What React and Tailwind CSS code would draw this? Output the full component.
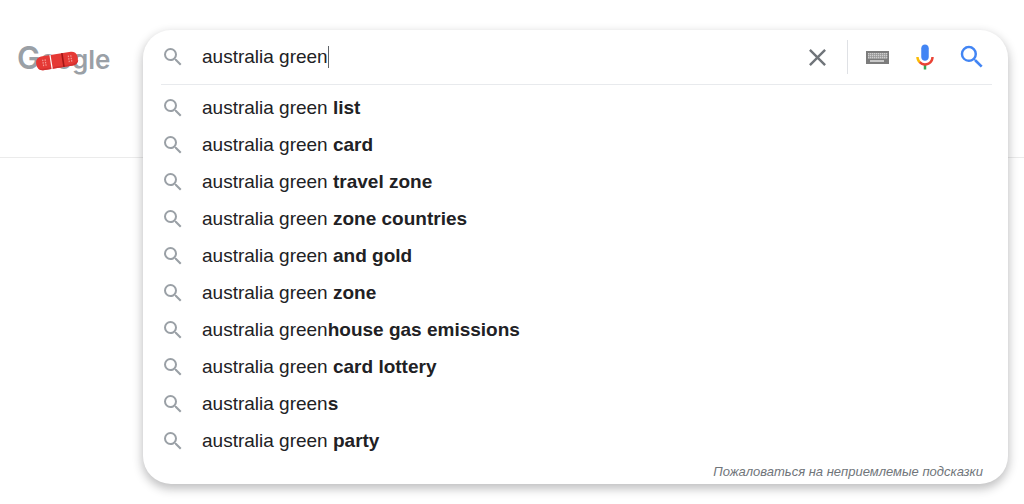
import React from "react";

const SUGGESTIONS = [
  { typed: "australia green ", rest: "list" },
  { typed: "australia green ", rest: "card" },
  { typed: "australia green ", rest: "travel zone" },
  { typed: "australia green ", rest: "zone countries" },
  { typed: "australia green ", rest: "and gold" },
  { typed: "australia green ", rest: "zone" },
  { typed: "australia green", rest: "house gas emissions" },
  { typed: "australia green ", rest: "card lottery" },
  { typed: "australia green", rest: "s" },
  { typed: "australia green ", rest: "party" },
];

function SearchIcon({ className }) {
  return (
    <svg viewBox="0 0 24 24" className={className} fill="currentColor" aria-hidden="true">
      <path d="M15.5 14h-.79l-.28-.27A6.471 6.471 0 0 0 16 9.5 6.5 6.5 0 1 0 9.5 16c1.61 0 3.09-.59 4.23-1.57l.27.28v.79l5 4.99L20.49 19l-4.99-5zm-6 0C7.01 14 5 11.99 5 9.5S7.01 5 9.5 5 14 7.01 14 9.5 11.99 14 9.5 14z" />
    </svg>
  );
}

function CloseIcon() {
  return (
    <svg viewBox="0 0 24 24" className="size-[29px] text-[#70757a]" fill="currentColor" aria-hidden="true">
      <path d="M19 6.41L17.59 5 12 10.59 6.41 5 5 6.41 10.59 12 5 17.59 6.41 19 12 13.41 17.59 19 19 17.59 13.41 12z" />
    </svg>
  );
}

function KeyboardIcon() {
  const columns = [2, 4, 6, 8, 10, 12, 14, 16, 18, 20];
  return (
    <svg viewBox="0 0 23 13" className="h-[13px] w-[23px]" aria-hidden="true">
      <rect width="23" height="13" fill="#7c7c7c" />
      <rect x="2" y="2" width="19" height="6" fill="#969696" />
      {[2, 4, 6].map((y) =>
        columns.map((x) => <rect key={`${x}-${y}`} x={x} y={y} width="1.3" height="1.3" fill="#cfcfcf" />)
      )}
      <rect x="4" y="9" width="14" height="2" fill="#c8c8c8" />
    </svg>
  );
}

function MicIcon() {
  return (
    <svg viewBox="0 0 24 24" className="size-[30px]" aria-hidden="true">
      <path fill="#4285f4" d="M12 15c1.66 0 3-1.31 3-2.97V4.98C15 3.32 13.66 2 12 2S9 3.32 9 4.98v7.06C9 13.69 10.34 15 12 15z" />
      <path fill="#34a853" d="M11 18.08h2V22h-2z" />
      <path fill="#fbbc05" d="M7.05 16.87C5.78 15.59 5 13.9 5 12h2c0 1.45.56 2.42 1.47 3.38v.32l-1.15 1.18z" />
      <path fill="#ea4335" d="M12 16.93a4.97 4.97 0 0 1-3.54-1.55l-1.41 1.49c1.26 1.34 3.02 2.13 4.95 2.13 3.87 0 6.99-2.92 6.99-7h-1.99c0 2.92-2.24 4.93-5 4.93z" />
    </svg>
  );
}

function Logo() {
  return (
    <a
      href="#home"
      aria-label="Google"
      className="relative block font-[Inter,sans-serif] text-[26px] leading-10 font-semibold text-[#9aa0a6]"
    >
      <span className="text-[31px]">G</span>oogle
      <svg viewBox="0 0 44 24" className="absolute top-[11px] left-[18px] h-6 w-11" aria-hidden="true">
        <g transform="rotate(-9 22 12)">
          <rect x="1" y="5" width="42" height="14" rx="6" fill="#e53935" />
          <path d="M2 16q2 3 5 3h30q4 0 6-4v-1q-2 3-6 3.5H7q-3 0-5-1.5z" fill="#d32f2f" />
          <path d="M16 5v14" stroke="#fff" strokeWidth="1.2" />
          <path d="M28 5v14" stroke="#a31515" strokeWidth="1.6" />
          <path d="M8 8.5v7M10.5 8.5v7M34 8.5v7M36.5 8.5v7" stroke="#f59a95" strokeWidth="1.2" strokeDasharray="1.5 1" />
        </g>
      </svg>
    </a>
  );
}

export default function App() {
  return (
    <div className="min-h-screen bg-white font-['Liberation_Sans',Arial,sans-serif] text-[#212124]">
      <header className="flex h-[158px] items-start border-b border-[#ebebeb] pt-[30px] pr-4">
        <div className="w-[143px] shrink-0 pt-2 pl-[17px]">
          <Logo />
        </div>

        <form
          role="search"
          onSubmit={(e) => e.preventDefault()}
          className="min-w-0 flex-1 rounded-[28px] bg-white shadow-[0_4px_10px_1px_rgba(32,33,36,0.28)]"
        >
          <div className="mr-4 ml-[18px] flex h-[55px] items-center border-b border-[#e8eaed]">
            <SearchIcon className="size-6 shrink-0 text-[#9aa0a6]" />
            <div className="ml-[17px] flex flex-1 items-center">
              <input
                type="text"
                aria-label="Search"
                defaultValue="australia green"
                className="h-7 bg-transparent text-[19px] outline-none [field-sizing:content]"
              />
              <span className="h-[22px] w-px bg-[#5f6368]" />
            </div>
            <button type="button" aria-label="Clear">
              <CloseIcon />
            </button>
            <span className="ml-[15px] h-[34px] w-px bg-[#dfe1e5]" />
            <button type="button" aria-label="Keyboard" className="ml-[18px]">
              <KeyboardIcon />
            </button>
            <button type="button" aria-label="Voice search" className="ml-[21px]">
              <MicIcon />
            </button>
            <button type="submit" aria-label="Submit search" className="mr-[5px] ml-[17px]">
              <SearchIcon className="size-[30px] text-[#4285f4]" />
            </button>
          </div>

          <ul className="pt-1">
            {SUGGESTIONS.map((s) => (
              <li key={s.rest}>
                <a href="#search" className="flex h-[37px] items-center pl-[18px] text-[19px]">
                  <SearchIcon className="size-6 shrink-0 text-[#9aa0a6]" />
                  <span className="pt-0.5 pl-[17px] whitespace-pre">
                    {s.typed}
                    <b>{s.rest}</b>
                  </span>
                </a>
              </li>
            ))}
          </ul>

          <div className="flex h-[25px] items-center justify-end pr-[25px]">
            <a href="#report" className="text-[13px] text-[#70757a] italic">
              Пожаловаться на неприемлемые подсказки
            </a>
          </div>
        </form>
      </header>
    </div>
  );
}
